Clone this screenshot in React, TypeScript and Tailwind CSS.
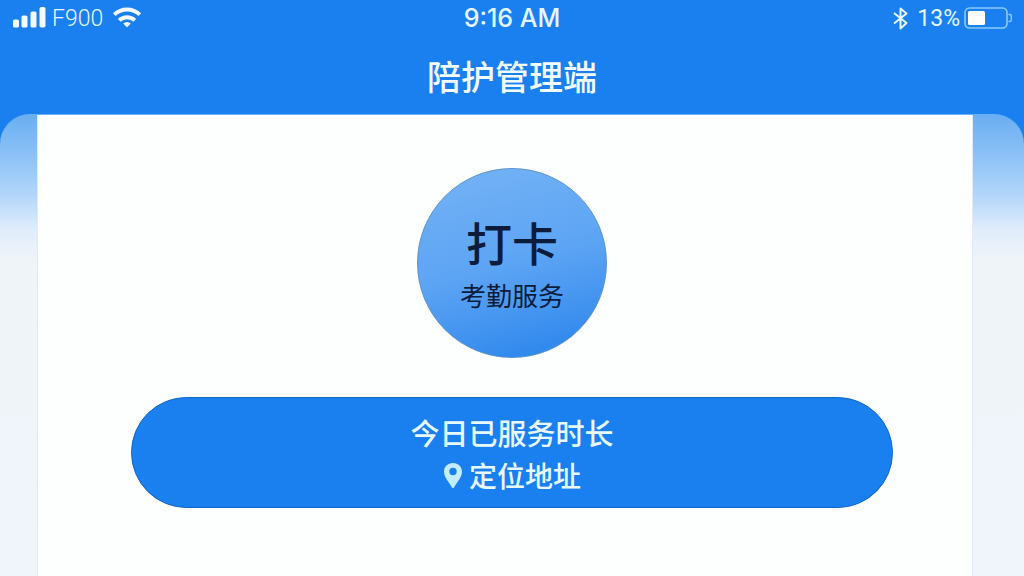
import type { ReactNode } from 'react';

function SignalIcon() {
  return (
    <svg aria-hidden="true" className="h-6 w-9" fill="#f0faff" viewBox="0 0 36 24">
      <rect height="8" rx="1.6" width="6" x="1" y="12.5" />
      <rect height="12" rx="1.6" width="6" x="9.5" y="8.5" />
      <rect height="16" rx="1.6" width="6" x="18.5" y="4.5" />
      <rect height="20.5" rx="1.8" width="6" x="27.5" y="0" />
    </svg>
  );
}

function WifiIcon() {
  return (
    <svg
      aria-hidden="true"
      className="h-6 w-8"
      fill="none"
      stroke="#f0faff"
      strokeWidth="4"
      viewBox="0 0 32 24"
    >
      <path d="M3.2 7.6C10.4 0.7 21.6 0.7 28.8 7.6" />
      <path d="M8.2 13.4C12.6 9.3 19.4 9.3 23.8 13.4" />
      <path
        d="M12.2 16.6Q16 13.2 19.8 16.6L16.7 19.8Q16 20.6 15.3 19.8Z"
        fill="#f0faff"
        stroke="none"
      />
    </svg>
  );
}

function BluetoothIcon() {
  return (
    <svg
      aria-hidden="true"
      className="h-6 w-4"
      fill="none"
      stroke="#e6f6ff"
      strokeLinejoin="round"
      strokeWidth="2"
      viewBox="0 0 16 24"
    >
      <path d="M1 6L13.5 16L7.5 21.5V1.5L13.5 6.5L1 16.5" />
    </svg>
  );
}

function BatteryIcon() {
  return (
    <svg aria-hidden="true" className="h-6 w-12" viewBox="0 0 48 24">
      <rect
        fill="none"
        height="20"
        rx="4.5"
        stroke="#8cc8fb"
        strokeWidth="1.6"
        width="42"
        x="1"
        y="1"
      />
      <path
        d="M44.5 7.5H46Q47.3 7.5 47.3 9V13Q47.3 14.5 46 14.5H44.5"
        fill="none"
        stroke="#8cc8fb"
        strokeWidth="1.4"
      />
      <rect fill="#fffef8" height="14" rx="1.5" width="17" x="4" y="4" />
    </svg>
  );
}

function PinIcon() {
  return (
    <svg aria-hidden="true" className="h-7 w-5" viewBox="0 0 20 28">
      <path
        clipRule="evenodd"
        d="M10 1C4.8 1 1 4.8 1 9.8C1 15.2 6 20.2 9 25.4Q10 27 11 25.4C14 20.2 19 15.2 19 9.8C19 4.8 15.2 1 10 1ZM10 5.8A3.7 3.7 0 1 1 10 13.2A3.7 3.7 0 1 1 10 5.8Z"
        fill="#c4ecff"
        fillRule="evenodd"
      />
    </svg>
  );
}

function StatusBar() {
  return (
    <div className="grid h-9 grid-cols-3 items-center pr-3 pl-3 font-[Roboto,sans-serif] text-[23px] text-[#e6f6ff]">
      <div className="flex items-center">
        <SignalIcon />
        <span className="ml-1 font-light">F900</span>
        <span className="ml-2">
          <WifiIcon />
        </span>
      </div>
      <time className="text-center font-[Inter,sans-serif] text-[25px] font-medium">
        9:16 AM
      </time>
      <div className="flex items-center justify-end">
        <BluetoothIcon />
        <span className="mr-1 ml-2">13%</span>
        <BatteryIcon />
      </div>
    </div>
  );
}

function ServiceBanner({ children }: { children: ReactNode }) {
  return (
    <section className="flex w-full flex-col items-center gap-1.5 rounded-full border border-[#1266c4] bg-[#1a80f0] pt-[18px] pb-[13px] text-[#e8f8ff]">
      {children}
    </section>
  );
}

export default function App() {
  return (
    <div className="flex min-h-screen flex-col bg-[#1a80f0] font-['Noto_Sans','Noto_Sans_CJK_SC',sans-serif]">
      <header className="text-center">
        <StatusBar />
        <h1 className="pt-5 pb-4 text-[34px] leading-[42px] font-medium text-[#f2fbff]">
          陪护管理端
        </h1>
      </header>

      <div className="flex flex-1 rounded-t-[30px] border-t border-[#68b0f8] bg-[linear-gradient(to_bottom,#6aaef2_0px,#8cc1f7_40px,#b2d6fa_80px,#e0edfb_115px,#eff4f9_145px,#eff5fa_100%)] pr-[51px] pl-[37px]">
        <main className="flex flex-1 flex-col items-center border-x border-[#dfebf5] bg-[#fdfefe] pt-[53px] pr-[79px] pb-17 pl-[93px]">
          <button
            className="flex size-[190px] cursor-pointer flex-col items-center justify-center rounded-full border border-[#5c93c8] bg-linear-165 from-[#70b0f5] from-10% via-[#5ca4f4] via-50% to-[#2a86ec] to-95% pt-2 text-[#0c1c3a]"
            type="button"
          >
            <span className="text-[46px] leading-[58px] font-medium">打卡</span>
            <span className="text-[26px] leading-[48px]">考勤服务</span>
          </button>

          <div className="mt-[39px] w-full">
            <ServiceBanner>
              <p className="text-[29px] leading-9 font-medium">
                今日已服务时长
              </p>
              <a className="flex items-center gap-1.5" href="#location">
                <PinIcon />
                <span className="text-[28px] leading-9 font-medium">
                  定位地址
                </span>
              </a>
            </ServiceBanner>
          </div>
        </main>
      </div>
    </div>
  );
}
